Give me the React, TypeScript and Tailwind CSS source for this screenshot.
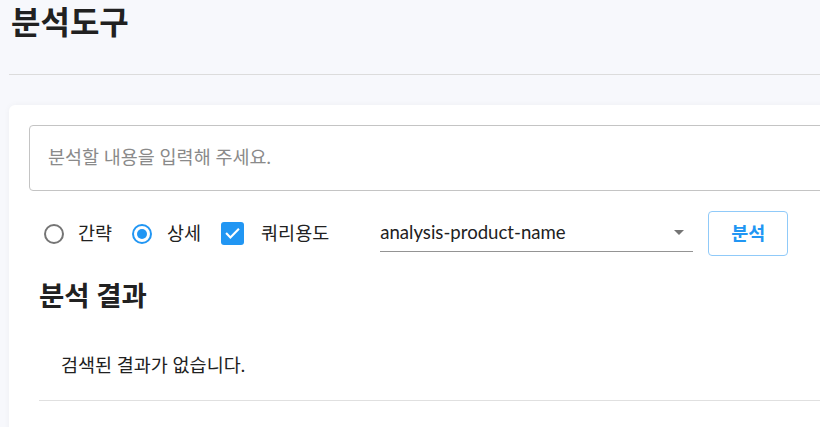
import React from "react";

const FONT = {
  fontFamily: '"Lato", "Noto Sans CJK KR", sans-serif',
};

function Radio({ checked }: { checked?: boolean }) {
  return (
    <span
      className={`flex h-[20px] w-[20px] items-center justify-center rounded-full border-2 ${
        checked ? "border-[#2196f3]" : "border-[#757575]"
      }`}
    >
      {checked && <span className="h-[10px] w-[10px] rounded-full bg-[#2196f3]" />}
    </span>
  );
}

function Checkbox() {
  return (
    <span className="flex h-[23px] w-[23px] items-center justify-center rounded-[3px] bg-[#2196f3]">
      <svg width="17" height="17" viewBox="0 0 24 24" fill="none">
        <path d="M4 12.5l5 5L20 6.5" stroke="white" strokeWidth="3" strokeLinecap="square" />
      </svg>
    </span>
  );
}

export default function App() {
  return (
    <div
      className="h-[427px] w-[820px] overflow-hidden bg-[#f7f8fc] text-[#212121]"
      style={FONT}
    >
      <div className="w-[900px] pl-[9px]">
        <div className="h-[75px] border-b border-[#dcdcdc]">
          <h1 className="pl-[2px] pt-[2px] text-[32px] font-bold leading-[40px]">분석도구</h1>
        </div>

        <div className="mt-[30px] min-h-[340px] rounded-l-md bg-white p-5 shadow-[0_0_6px_rgba(0,0,0,0.04)]">
          <div className="flex h-[66px] items-center rounded border border-[#c4c4c4] px-[18px] text-[18.5px] text-[#8a8a8a]">
            분석할 내용을 입력해 주세요.
          </div>

          <div className="mt-5 flex h-[45px] items-center text-[18.5px]">
            <span className="ml-[15px]">
              <Radio />
            </span>
            <span className="ml-[14px]">간략</span>
            <span className="ml-[20px]">
              <Radio checked />
            </span>
            <span className="ml-[15px]">상세</span>
            <span className="ml-[20px]">
              <Checkbox />
            </span>
            <span className="ml-[17px]">쿼리용도</span>

            <div className="mb-[4px] ml-[51px] flex h-[36px] w-[313px] items-center justify-between self-end border-b border-[#949494] pb-[2px]">
              <span className="text-[18.6px]">analysis-product-name</span>
              <span className="mr-[9px] h-0 w-0 border-x-[5px] border-t-[5px] border-x-transparent border-t-[#757575]" />
            </div>

            <button className="ml-[15px] h-[45px] w-[80px] self-center rounded border border-[#90caf9] text-[18.5px] font-bold text-[#2196f3]">
              분석
            </button>
          </div>

          <div className="mt-[23px] px-[10px]">
            <h2 className="text-[27.5px] font-bold leading-[34px]">분석 결과</h2>
            <div className="flex h-[88px] items-center border-b border-[#e0e0e0] pl-[22px] pt-[18px] text-[18.5px]">
              검색된 결과가 없습니다.
            </div>
          </div>
        </div>
      </div>
    </div>
  );
}
